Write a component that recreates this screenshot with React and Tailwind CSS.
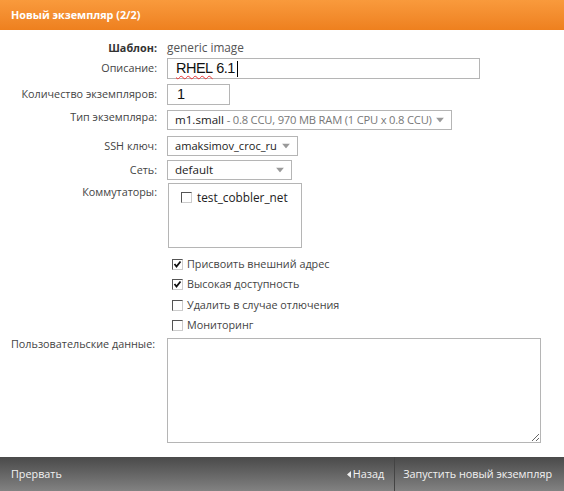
import React from 'react';

const font = { fontFamily: '"Open Sans", "Noto Sans", sans-serif' };

const Label = ({ children, bold, className = '' }) => (
  <div className={`w-[157px] shrink-0 text-right whitespace-nowrap ${bold ? 'font-bold text-[#333]' : 'text-[#444]'} ${className}`}>
    {children}
  </div>
);

const Arrow = () => (
  <svg width="8" height="5" viewBox="0 0 8 5" className="absolute right-[7px] top-1/2 -translate-y-1/2">
    <path d="M0 0 L8 0 L4 5 Z" fill="#9a9a9a" />
  </svg>
);

const Select = ({ width, size = 'text-[11.6px]', children }) => (
  <div className={`relative ${width} h-[20px] border border-[#b5b5b5] bg-white flex items-center pl-[7px] text-[#222] ${size} whitespace-nowrap`}>
    {children}
    <Arrow />
  </div>
);

const Box = ({ checked }) => (
  <span className="relative inline-block w-[11px] h-[11px] shrink-0 bg-white border border-t-[#555] border-l-[#555] border-b-[#ccc] border-r-[#ccc]">
    {checked && (
      <svg width="9" height="9" viewBox="0 0 9 9" className="absolute left-0 top-0">
        <path d="M1.5 4 L3.5 6.5 L7.5 1.5" stroke="#111" strokeWidth="1.8" fill="none" />
      </svg>
    )}
  </span>
);

const Check = ({ checked, children }) => (
  <div className="flex items-center h-[20.5px] gap-[4px] text-[#444]">
    <Box checked={checked} />
    <span>{children}</span>
  </div>
);

export default function App() {
  return (
    <div className="w-[564px] h-[491px] bg-white flex flex-col text-[10.8px] leading-none" style={font}>
      <div className="h-[30px] shrink-0 bg-gradient-to-b from-[#f99a3c] to-[#ee801e] flex items-center pl-[11px] text-white font-bold">
        Новый экземпляр (2/2)
      </div>

      <div className="flex-1 flex flex-col">
        <div className="flex items-center gap-[10px] mt-[11px] h-[14px]">
          <Label bold>Шаблон:</Label>
          <span className="text-[#555] text-[11.8px]">generic image</span>
        </div>

        <div className="flex items-center gap-[10px] mt-[3px]">
          <Label>Описание:</Label>
          <div className="w-[313px] h-[21px] border border-[#b5b5b5] flex items-center pl-[8px] text-[14.5px] tracking-[-0.5px] text-[#111]" style={{ fontFamily: '"Liberation Sans", Arial, sans-serif' }}>
            <span className="underline decoration-wavy decoration-[#e33] decoration-1 underline-offset-2">RHEL</span>
            <span>&nbsp;6.1</span>
            <span className="inline-block w-px h-[16px] bg-black ml-[2px]" />
          </div>
        </div>

        <div className="flex items-center gap-[10px] mt-[5px]">
          <Label>Количество экземпляров:</Label>
          <div className="w-[63px] h-[21px] border border-[#b5b5b5] flex items-center pl-[9px] text-[14.5px] text-[#111]" style={{ fontFamily: '"Liberation Sans", Arial, sans-serif' }}>1</div>
        </div>

        <div className="flex items-start gap-[10px] mt-[5px]">
          <Label className="pt-[2px]">Тип экземпляра:</Label>
          <Select width="w-[285px]">
            <span>m1.small</span>
            <span className="text-[#777] text-[11.2px] tracking-[-0.2px]">&nbsp;- 0.8 CCU, 970 MB RAM (1 CPU x 0.8 CCU)</span>
          </Select>
        </div>

        <div className="flex items-center gap-[10px] mt-[6px]">
          <Label>SSH ключ:</Label>
          <Select width="w-[131px]" size="text-[11.1px]">amaksimov_croc_ru</Select>
        </div>

        <div className="flex items-center gap-[10px] mt-[4px]">
          <Label>Сеть:</Label>
          <Select width="w-[125px]">default</Select>
        </div>

        <div className="flex items-start gap-[10px] mt-[3px]">
          <Label className="pt-[4px]">Коммутаторы:</Label>
          <div className="w-[134px] h-[65px] border border-[#b5b5b5] ml-px pt-[8px] pl-[12px]">
            <div className="flex items-center gap-[5px] text-[#222] text-[11.8px]">
              <Box />
              <span>test_cobbler_net</span>
            </div>
          </div>
        </div>

        <div className="flex flex-col ml-[172px] mt-[6px]">
          <Check checked>Присвоить внешний адрес</Check>
          <Check checked>Высокая доступность</Check>
          <Check>Удалить в случае отлючения</Check>
          <Check>Мониторинг</Check>
        </div>

        <div className="flex items-start mt-[2px] pl-[11px]">
          <div className="w-[156px] shrink-0 pt-[1px] text-[#444] whitespace-nowrap">Пользовательские данные:</div>
          <textarea className="w-[374px] h-[105px] border border-[#b5b5b5] resize outline-none" />
        </div>
      </div>

      <div className="h-[34px] shrink-0 bg-gradient-to-b from-[#4a4a4a] to-[#828282] flex items-stretch text-[#f2f2f2]">
        <div className="flex-1 flex items-center pl-[11px]">Прервать</div>
        <div className="flex items-center pr-[10px] gap-[2px]">
          <svg width="4" height="7" viewBox="0 0 4 7"><path d="M4 0 L0 3.5 L4 7 Z" fill="#eee" /></svg>
          <span>Назад</span>
        </div>
        <div className="w-px bg-[#8a8a8a] border-r border-[#444]" />
        <div className="flex items-center pl-[8px] pr-[12px]">Запустить новый экземпляр</div>
      </div>
    </div>
  );
}
